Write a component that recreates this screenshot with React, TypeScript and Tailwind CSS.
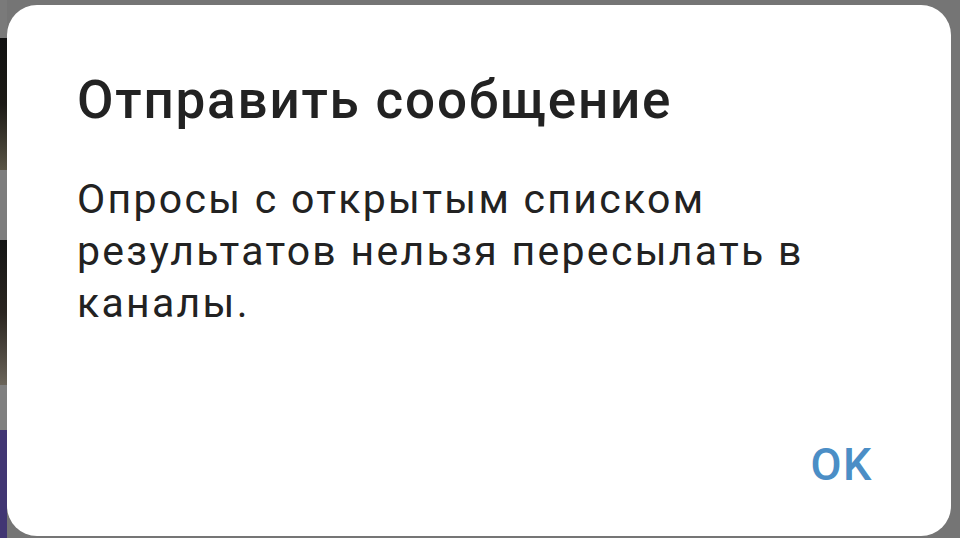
export default function App() {
  return (
    <main
      className="flex w-[960px] h-[538px] bg-[#757575] overflow-hidden"
      style={{ fontFamily: "Roboto, 'Noto Sans', sans-serif" }}
    >
      {/* backdrop peeking out on the left */}
      <div className="flex flex-col w-[7px] shrink-0">
        <div className="h-[38px] bg-[#7a7a7a]" />
        <div className="h-[132px] bg-gradient-to-b from-[#111] via-[#1c1a16] to-[#5a5546]" />
        <div className="h-[70px] bg-[#7d7d7d]" />
        <div className="h-[145px] bg-gradient-to-b from-[#141414] via-[#2a2520] to-[#6b655a]" />
        <div className="h-[45px] bg-[#808080]" />
        <div className="flex-1 bg-[#413673]" />
      </div>

      <div className="flex flex-col flex-1 pt-[5px] pb-[2px]">
        <section className="flex flex-col flex-1 bg-white rounded-[30px] pl-[70px] pr-[78px] pt-[65px] pb-[45px]">
          <h1 className="text-[53px] leading-[60px] font-medium tracking-[1.8px] text-[#222222]">
            Отправить сообщение
          </h1>
          <p className="mt-[43px] text-[41px] leading-[52px] tracking-[2.3px] text-[#222222]">
            Опросы с открытым списком результатов нельзя пересылать в каналы.
          </p>
          <div className="mt-auto flex justify-end">
            <button className="text-[45px] leading-[52px] font-medium tracking-[1.5px] text-[#4b8ec6]">
              OK
            </button>
          </div>
        </section>
      </div>

      <div className="w-[9px] shrink-0 bg-[#757575]" />
    </main>
  );
}
